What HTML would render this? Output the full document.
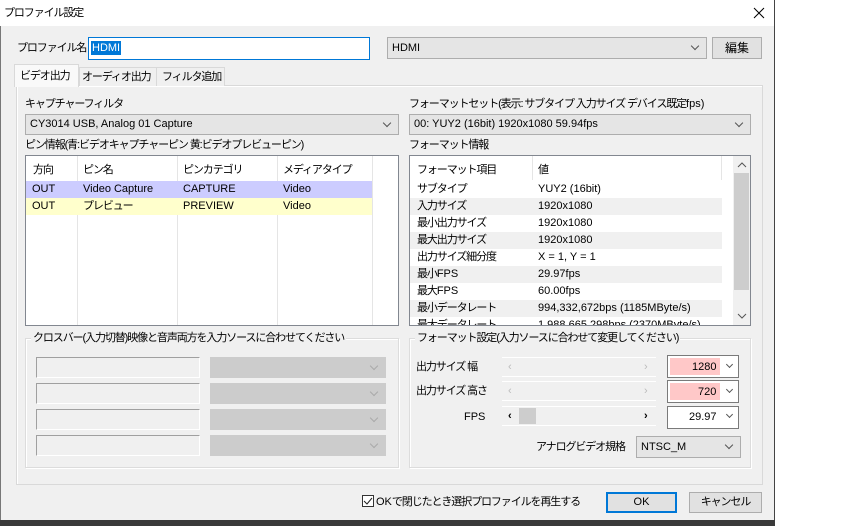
<!DOCTYPE html>
<html><head><meta charset="utf-8"><style>
*{box-sizing:border-box;margin:0;padding:0}
body{width:857px;height:526px;background:#fff;position:relative;overflow:hidden;font-family:"Liberation Sans","Noto Sans CJK JP",sans-serif;font-size:11px;letter-spacing:-1.1px;color:#000}
.l{letter-spacing:0}
.a{position:absolute}
.win{left:0;top:0;width:775px;height:520px;background:#f0f0f0;border-right:1px solid #444;border-left:1px solid #777}
.title{left:0;top:0;width:774px;height:26px;background:#fff}
.t{position:absolute;white-space:nowrap;line-height:14px}
.combo{position:absolute;background:#e5e5e5;border:1px solid #adadad;padding-left:4px;line-height:18px;white-space:nowrap;letter-spacing:0}
.combo:after{content:"";position:absolute;right:8px;top:5px;width:5px;height:5px;border-right:1px solid #555;border-bottom:1px solid #555;transform:rotate(45deg)}
.dis{background:#ccc;border-color:#ccc}
.dis:after{border-color:#aaa}
.btn{position:absolute;background:#e1e1e1;border:1px solid #adadad;text-align:center;line-height:19px}
.grp{position:absolute;border:1px solid #dcdcdc;box-shadow:inset 1px 1px 0 #fff,1px 1px 0 #fff}
.gt{position:absolute;background:#f0f0f0;padding:0 2px;top:-8px;left:5px;white-space:nowrap;line-height:14px}
.list{position:absolute;background:#fff;border:1px solid #828790}
.row{position:absolute;left:0;height:17px;line-height:17px;white-space:nowrap}
.vl{position:absolute;width:1px;background:#e5e5e5}
.tb{position:absolute;background:#f0f0f0;border:1px solid #a0a0a0;border-bottom-color:#fff;border-right-color:#fff}
.pink{background:#ffc8c8}
.dd{position:absolute;width:5px;height:5px;border-right:1px solid #555;border-bottom:1px solid #555;transform:rotate(45deg)}
</style></head><body>
<div class="a win"></div>
<div class="a" style="left:0;top:520px;width:775px;height:6px;background:#3a3a3a"></div>
<div class="a title"></div>
<div class="t" style="left:4px;top:6px">プロファイル設定</div>
<svg class="a" style="left:753px;top:7px" width="12" height="12"><path d="M1 1L11 11M11 1L1 11" stroke="#000" stroke-width="1"/></svg>

<div class="t" style="left:17px;top:41px">プロファイル名</div>
<div class="a" style="left:88px;top:37px;width:282px;height:23px;background:#fff;border:1px solid #0078d7"></div>
<div class="t l" style="left:91px;top:41px;background:#0078d7;color:#fff;padding:0 1px">HDMI</div>
<div class="combo" style="left:387px;top:37px;width:320px;height:22px;line-height:20px">HDMI</div>
<div class="btn" style="left:712px;top:37px;width:50px;height:22px;line-height:20px;font-size:12px;letter-spacing:0">編集</div>

<div class="a" style="left:16px;top:85px;width:747px;height:400px;border:1px solid #d9d9d9;background:#f0f0f0;box-shadow:inset 1px 1px 0 #fff"></div>
<div class="a" style="left:14px;top:64px;width:65px;height:23px;background:#f9f9f9;border:1px solid #d9d9d9;border-bottom:none"></div>
<div class="t" style="left:20px;top:69px">ビデオ出力</div>
<div class="a" style="left:79px;top:67px;width:78px;height:19px;border:1px solid #d9d9d9;border-bottom:none;background:#f0f0f0"></div>
<div class="t" style="left:82px;top:70px">オーディオ出力</div>
<div class="a" style="left:157px;top:67px;width:68px;height:19px;border:1px solid #d9d9d9;border-bottom:none;border-left:none;background:#f0f0f0"></div>
<div class="t" style="left:162px;top:70px">フィルタ追加</div>

<div class="t" style="left:25px;top:97px">キャプチャーフィルタ</div>
<div class="combo" style="left:25px;top:114px;width:374px;height:21px">CY3014 USB, Analog 01 Capture</div>
<div class="t" style="left:25px;top:138px">ピン情報(青:ビデオキャプチャーピン 黄:ビデオプレビューピン)</div>
<div class="list" style="left:25px;top:155px;width:374px;height:171px">
 <div class="vl" style="left:51px;top:0;height:169px"></div>
 <div class="vl" style="left:151px;top:0;height:169px"></div>
 <div class="vl" style="left:251px;top:0;height:169px"></div>
 <div class="vl" style="left:346px;top:0;height:169px"></div>
 <div class="row" style="top:3px;height:22px;line-height:22px;width:346px"><span class="a" style="left:7px">方向</span><span class="a" style="left:57px">ピン名</span><span class="a" style="left:157px">ピンカテゴリ</span><span class="a" style="left:257px">メディアタイプ</span></div>
 <div class="row l" style="top:25px;width:346px;background:#ccccff"><span class="a" style="left:6px">OUT</span><span class="a" style="left:57px">Video Capture</span><span class="a" style="left:157px">CAPTURE</span><span class="a" style="left:257px">Video</span></div>
 <div class="row" style="top:42px;width:346px;background:#ffffcc"><span class="a l" style="left:6px">OUT</span><span class="a" style="left:57px">プレビュー</span><span class="a l" style="left:157px">PREVIEW</span><span class="a l" style="left:257px">Video</span></div>
</div>
<div class="grp" style="left:25px;top:338px;width:374px;height:130px"><div class="gt">クロスバー(入力切替)映像と音声両方を入力ソースに合わせてください</div></div>
<div class="tb" style="left:36px;top:357px;width:164px;height:21px"></div>
<div class="combo dis" style="left:210px;top:357px;width:176px;height:21px"></div>
<div class="tb" style="left:36px;top:383px;width:164px;height:21px"></div>
<div class="combo dis" style="left:210px;top:383px;width:176px;height:21px"></div>
<div class="tb" style="left:36px;top:409px;width:164px;height:21px"></div>
<div class="combo dis" style="left:210px;top:409px;width:176px;height:21px"></div>
<div class="tb" style="left:36px;top:435px;width:164px;height:21px"></div>
<div class="combo dis" style="left:210px;top:435px;width:176px;height:21px"></div>

<div class="t" style="left:409px;top:97px">フォーマットセット(表示: サブタイプ 入力サイズ デバイス既定<span class="l">fps</span>)</div>
<div class="combo" style="left:409px;top:114px;width:342px;height:21px">00: YUY2 (16bit) 1920x1080 59.94fps</div>
<div class="t" style="left:409px;top:138px">フォーマット情報</div>
<div class="list" style="left:409px;top:155px;width:342px;height:171px;overflow:hidden">
 <div class="vl" style="left:122px;top:0;height:24px"></div>
 <div class="vl" style="left:311px;top:0;height:24px"></div>
 <div class="row" style="top:3px;height:22px;line-height:22px;width:312px"><span class="a" style="left:7px">フォーマット項目</span><span class="a" style="left:128px">値</span></div>
 <div class="row" style="top:25px;width:312px"><span class="a" style="left:7px">サブタイプ</span><span class="a l" style="left:128px">YUY2 (16bit)</span></div>
 <div class="row" style="top:42px;width:312px;background:#f0f0f0"><span class="a" style="left:7px">入力サイズ</span><span class="a l" style="left:128px">1920x1080</span></div>
 <div class="row" style="top:59px;width:312px"><span class="a" style="left:7px">最小出力サイズ</span><span class="a l" style="left:128px">1920x1080</span></div>
 <div class="row" style="top:76px;width:312px;background:#f0f0f0"><span class="a" style="left:7px">最大出力サイズ</span><span class="a l" style="left:128px">1920x1080</span></div>
 <div class="row" style="top:93px;width:312px"><span class="a" style="left:7px">出力サイズ細分度</span><span class="a l" style="left:128px">X = 1, Y = 1</span></div>
 <div class="row" style="top:110px;width:312px;background:#f0f0f0"><span class="a" style="left:7px">最小<span class="l">FPS</span></span><span class="a l" style="left:128px">29.97fps</span></div>
 <div class="row" style="top:127px;width:312px"><span class="a" style="left:7px">最大<span class="l">FPS</span></span><span class="a l" style="left:128px">60.00fps</span></div>
 <div class="row" style="top:144px;width:312px;background:#f0f0f0"><span class="a" style="left:7px">最小データレート</span><span class="a l" style="left:128px">994,332,672bps (1185MByte/s)</span></div>
 <div class="row" style="top:161px;width:312px"><span class="a" style="left:7px">最大データレート</span><span class="a l" style="left:128px">1,988,665,298bps (2370MByte/s)</span></div>
 <div class="a" style="left:323px;top:0;width:17px;height:169px;background:#f0f0f0"></div>
 <div class="a" style="left:324px;top:17px;width:15px;height:117px;background:#cdcdcd"></div>
 <svg class="a" style="left:327px;top:5px" width="10" height="8"><path d="M1 6L5 2L9 6" stroke="#555" fill="none"/></svg>
 <svg class="a" style="left:327px;top:156px" width="10" height="8"><path d="M1 2L5 6L9 2" stroke="#555" fill="none"/></svg>
</div>
<div class="grp" style="left:409px;top:338px;width:342px;height:130px"><div class="gt">フォーマット設定(入力ソースに合わせて変更してください)</div></div>
<div class="t" style="left:416px;top:360px">出力サイズ 幅</div>
<div class="a" style="left:502px;top:357px;width:154px;height:20px;border-top:1px solid #fff;border-bottom:1px solid #fff"></div>
<div class="t" style="left:508px;top:360px;color:#bbb">‹</div><div class="t" style="left:644px;top:360px;color:#bbb">›</div>
<div class="a" style="left:667px;top:355px;width:72px;height:23px;background:#fff;border:1px solid #7a7a7a"></div>
<div class="a pink" style="left:670px;top:358px;width:50px;height:17px"></div>
<div class="t l" style="left:692px;top:360px">1280</div><div class="dd" style="left:727px;top:362px"></div>
<div class="t" style="left:416px;top:384px">出力サイズ 高さ</div>
<div class="a" style="left:502px;top:381px;width:154px;height:20px;border-top:1px solid #fff;border-bottom:1px solid #fff"></div>
<div class="t" style="left:508px;top:384px;color:#bbb">‹</div><div class="t" style="left:644px;top:384px;color:#bbb">›</div>
<div class="a" style="left:667px;top:380px;width:72px;height:23px;background:#fff;border:1px solid #7a7a7a"></div>
<div class="a pink" style="left:670px;top:383px;width:50px;height:17px"></div>
<div class="t l" style="left:698px;top:385px">720</div><div class="dd" style="left:727px;top:387px"></div>
<div class="t l" style="left:464px;top:410px">FPS</div>
<div class="a" style="left:502px;top:406px;width:154px;height:20px;background:#f0f0f0;border-top:1px solid #fff;border-bottom:1px solid #fff"></div>
<div class="a" style="left:519px;top:408px;width:17px;height:16px;background:#cdcdcd"></div>
<div class="t" style="left:508px;top:409px;font-weight:bold">‹</div><div class="t" style="left:644px;top:409px;font-weight:bold">›</div>
<div class="a" style="left:667px;top:406px;width:72px;height:23px;background:#fff;border:1px solid #7a7a7a"></div>
<div class="t l" style="left:689px;top:410px">29.97</div><div class="dd" style="left:727px;top:412px"></div>
<div class="t" style="left:536px;top:440px">アナログビデオ規格</div>
<div class="combo" style="left:636px;top:436px;width:105px;height:22px;line-height:20px">NTSC_M</div>

<div class="a" style="left:362px;top:495px;width:12px;height:12px;border:1px solid #333;background:#fff"></div>
<svg class="a" style="left:363px;top:496px" width="10" height="10"><path d="M1 5L4 8L9 2" stroke="#222" fill="none"/></svg>
<div class="t" style="left:376px;top:495px"><span class="l">OK</span>で閉じたとき選択プロファイルを再生する</div>
<div class="btn l" style="left:606px;top:492px;width:71px;height:21px;border:2px solid #0078d7;line-height:17px">OK</div>
<div class="btn" style="left:689px;top:492px;width:73px;height:21px">キャンセル</div>
</body></html>
